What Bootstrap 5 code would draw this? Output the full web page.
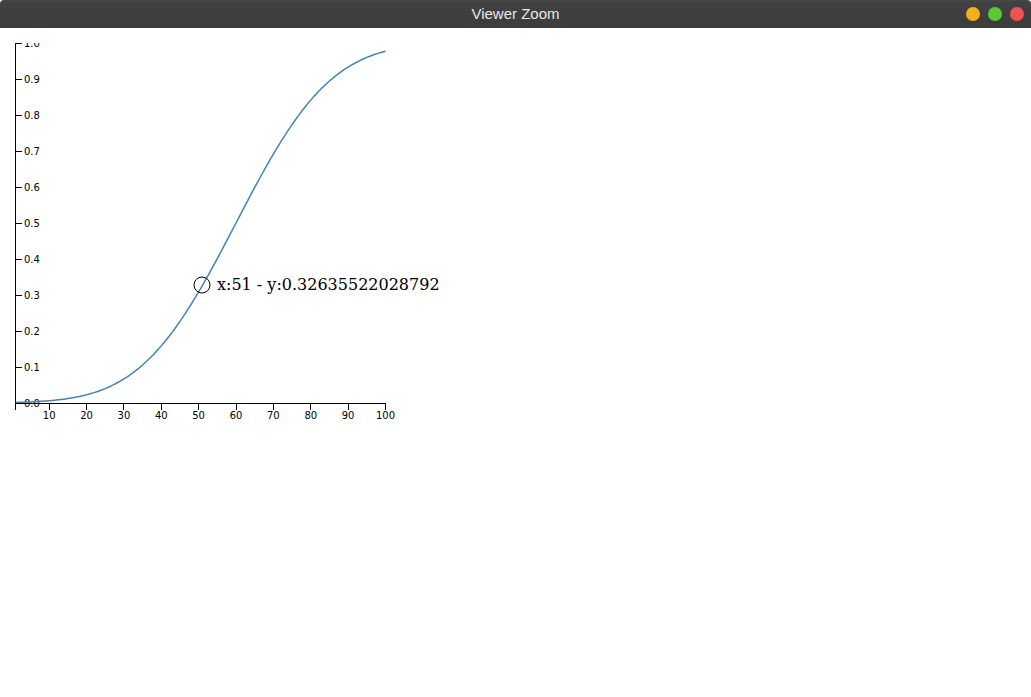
<!DOCTYPE html>
<html lang="en">
<head>
<meta charset="utf-8">
<title>Viewer Zoom</title>
<link href="https://cdn.jsdelivr.net/npm/bootstrap@5.3.0/dist/css/bootstrap.min.css" rel="stylesheet">
<style>
html, body { height: 100%; background: #fff; }
.win-bar { height: 28px; background: linear-gradient(#4a4a4a 0, #414141 2px, #3c3c3c 100%); border-radius: 4px 4px 0 0; color: #e8e8e8; font-family: "Liberation Sans", Arial, sans-serif; font-size: 15px; }
.win-side { width: 65px; }
.win-dots { padding-right: 7px; }
.win-dot { width: 14px; height: 14px; }
.dot-min { background: #f5af1b; }
.dot-max { background: #5bc834; }
.dot-close { background: #ef5350; }
.chart-svg { display: block; margin-top: 15px; overflow: hidden; }
.axis-line { fill: none; stroke: #000; stroke-width: 1; shape-rendering: crispEdges; }
.axis-text { font-family: "DejaVu Sans", sans-serif; font-size: 10px; fill: #000; }
.curve { fill: none; stroke: steelblue; stroke-width: 1.5; }
.focus-ring-c { fill: none; stroke: #000; stroke-width: 1; }
.focus-text { font-family: "DejaVu Serif", serif; font-size: 16px; fill: #000; }
</style>
</head>
<body class="m-0">
<div class="win-bar d-flex align-items-center">
  <div class="win-side"></div>
  <div class="flex-grow-1 text-center">Viewer Zoom</div>
  <div class="win-side win-dots d-flex justify-content-end gap-2">
    <span class="win-dot rounded-circle dot-min"></span>
    <span class="win-dot rounded-circle dot-max"></span>
    <span class="win-dot rounded-circle dot-close"></span>
  </div>
</div>
<svg id="chart" class="chart-svg" width="1031" height="400" xmlns="http://www.w3.org/2000/svg">
  <g id="axes"></g>
  <path id="curve" class="curve"></path>
  <circle class="focus-ring-c" cx="202" cy="242" r="8"></circle>
  <text class="focus-text" x="217" y="247">x:51 - y:0.32635522028792</text>
</svg>
<script>
(function () {
  var ns = 'http://www.w3.org/2000/svg';
  var top = 43;
  function X(v) { return 15.5 + (v - 1) * 370 / 99; }
  function Y(v) { return 403 - top + 0.5 - v * 360; }
  function cdf(z) {
    var t = 1 / (1 + 0.2316419 * Math.abs(z));
    var d = 0.3989422804 * Math.exp(-z * z / 2);
    var p = d * t * (0.31938153 + t * (-0.356563782 + t * (1.781477937 + t * (-1.821255978 + t * 1.330274429))));
    return z > 0 ? 1 - p : p;
  }
  var d = '';
  for (var i = 1; i <= 100; i++) {
    d += (i === 1 ? 'M' : 'L') + X(i).toFixed(2) + ',' + (Y(cdf((i - 60) / 20)) - 0.5).toFixed(2);
  }
  document.getElementById('curve').setAttribute('d', d);
  var g = document.getElementById('axes');
  function el(name, attrs, text) {
    var e = document.createElementNS(ns, name);
    for (var k in attrs) e.setAttribute(k, attrs[k]);
    if (text) e.textContent = text;
    g.appendChild(e);
  }
  var y0 = Y(0), y1 = Y(1);
  el('path', { 'class': 'axis-line', d: 'M21.5,' + y1 + 'H15.5V' + (y0 + 6) });
  el('path', { 'class': 'axis-line', d: 'M15.5,' + (y0 + 6) + 'V' + y0 + 'H385.5V' + (y0 + 6) });
  for (var t = 0; t <= 10; t++) {
    var yy = Math.round(Y(t / 10) - 0.5) + 0.5;
    el('path', { 'class': 'axis-line', d: 'M15.5,' + yy + 'H21.5' });
    el('text', { 'class': 'axis-text', x: 24, y: yy + 3.5 }, (t / 10).toFixed(1));
  }
  for (var v = 10; v <= 100; v += 10) {
    var xx = Math.floor(X(v)) + 0.5;
    el('path', { 'class': 'axis-line', d: 'M' + xx + ',' + y0 + 'V' + (y0 + 6) });
    el('text', { 'class': 'axis-text', x: X(v), y: y0 + 15, 'text-anchor': 'middle' }, String(v));
  }
})();
</script>
<script src="https://cdn.jsdelivr.net/npm/bootstrap@5.3.0/dist/js/bootstrap.bundle.min.js"></script>
</body>
</html>
